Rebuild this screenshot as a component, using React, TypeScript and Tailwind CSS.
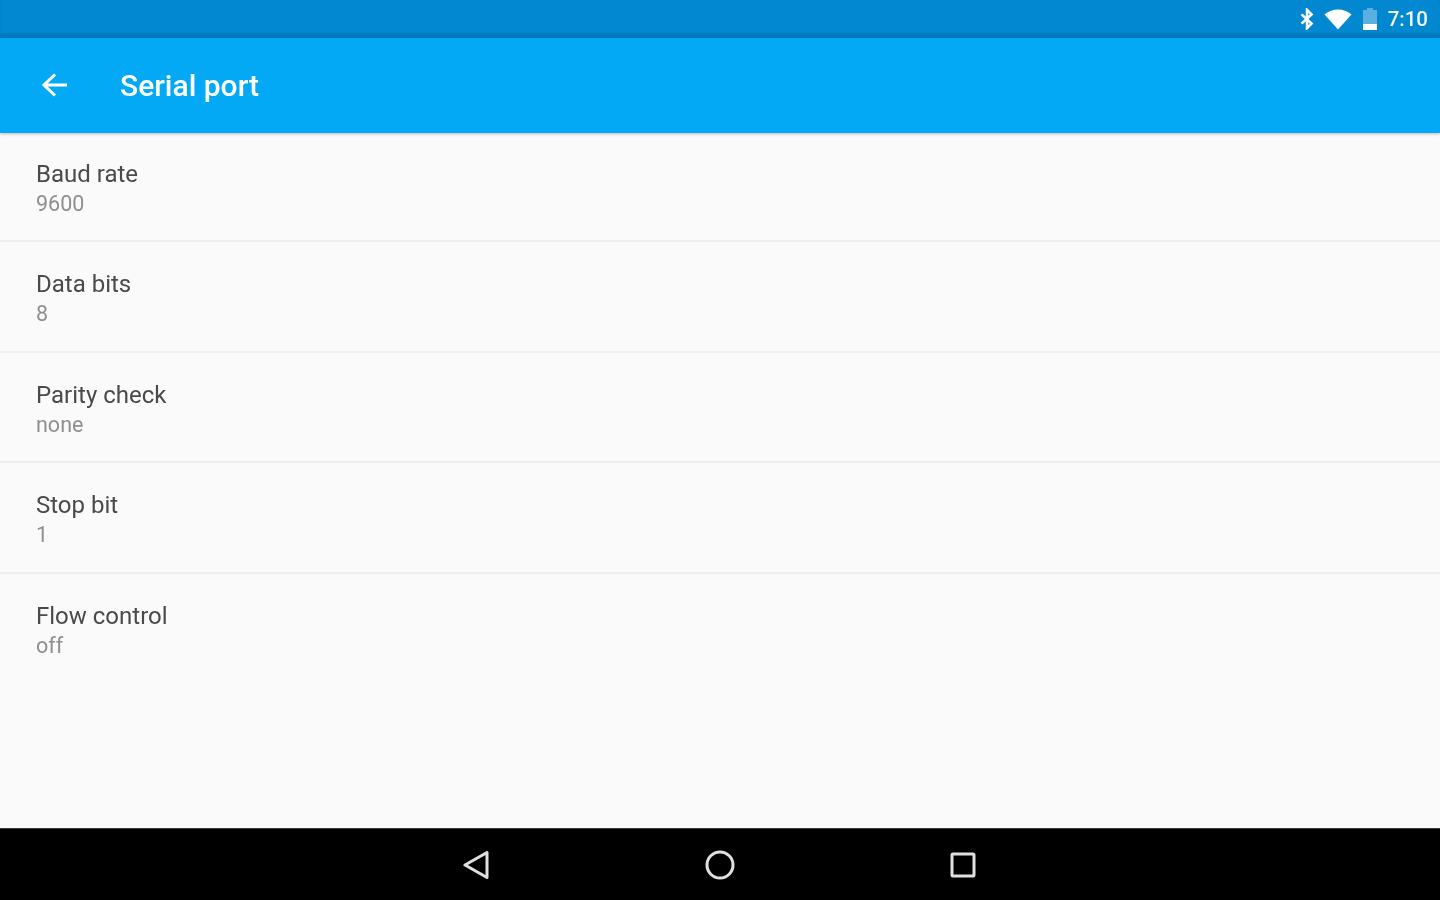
import React from 'react';

const settings = [
    { title: 'Baud rate', value: '9600' },
    { title: 'Data bits', value: '8' },
    { title: 'Parity check', value: 'none' },
    { title: 'Stop bit', value: '1' },
    { title: 'Flow control', value: 'off' },
];

function StatusBar() {
    return (
        <div className="h-[38px] bg-[#0288d1] flex items-center justify-end pr-[12px] shadow-[inset_0_-5px_2px_#027cc0]">
            <svg className="w-[16px] h-[22px] mr-[9px] blur-[0.6px]" viewBox="0 0 16 24" fill="none" stroke="#ffffff" strokeWidth="2.800">
                <path d="M2 7l11 10-5 5V2l5 5L2 17" />
            </svg>
            <svg className="w-[28px] h-[21px] mr-[10px] blur-[0.5px]" viewBox="0 0 28 21" fill="#ffffff">
                <path d="M14 20.5L0.5 5.5C4 2.5 8.500 0.500 14 0.500s10 2 13.500 5z" />
            </svg>
            <svg className="w-[16px] h-[22px] mr-[10px] blur-[0.5px]" viewBox="0 0 16 22">
                <path d="M5 0h6v2h4v20H1V2h4z" fill="#ffffff" fillOpacity="0.35" />
                <path d="M1 16h14v6H1z" fill="#ffffff" />
            </svg>
            <span className="font-['Roboto',sans-serif] font-medium text-[20.500px] leading-none text-[#f2f9fd] blur-[0.6px]">7:10</span>
        </div>
    );
}

function AppBar() {
    return (
        <div className="h-[95px] bg-[#03a9f4] flex items-center pl-[42px] shadow-[0_1px_3px_rgba(0,0,0,0.25)] relative">
            <svg className="w-[26px] h-[26px] mr-[52px] -mt-[1px] blur-[0.6px]" viewBox="0 0 26 26" fill="none" stroke="#ffffff" strokeWidth="3">
                <path d="M25 13H2M13 2.500L2 13l11 10.500" />
            </svg>
            <span className="font-['Roboto',sans-serif] font-medium text-[30px] leading-none text-white mt-[1px] blur-[0.6px]">Serial port</span>
        </div>
    );
}

function NavBar() {
    return (
        <div className="h-[72px] bg-black flex items-center justify-center gap-[213px] border-t border-[#3a3a3a] box-border">
            <svg className="w-[30px] h-[30px] blur-[0.5px]" viewBox="0 0 30 30" fill="none" stroke="#e0e0e0" strokeWidth="3" strokeLinejoin="round">
                <path d="M25 2.500V27.500L3 15z" />
            </svg>
            <svg className="w-[30px] h-[30px] blur-[0.5px]" viewBox="0 0 30 30" fill="none" stroke="#e0e0e0" strokeWidth="3">
                <circle cx="15" cy="15" r="13" />
            </svg>
            <svg className="w-[30px] h-[30px] blur-[0.5px]" viewBox="0 0 30 30" fill="none" stroke="#e0e0e0" strokeWidth="3" strokeLinejoin="round">
                <rect x="4" y="4" width="22" height="22" rx="1" />
            </svg>
        </div>
    );
}

export default function App() {
    return (
        <div className="w-[1440px] h-[900px] flex flex-col bg-[#fafafa] overflow-hidden font-['Roboto',sans-serif]">
            <StatusBar />
            <AppBar />
            <div className="flex-1">
                {settings.map((item, i) => (
                    <div
                        key={i}
                        className={`h-[109.4px] mb-[1px] pl-[36px] pt-[27px] box-border ${i < settings.length - 1 ? 'border-b-2 border-[#eeeeee]' : ''}`}
                    >
                        <div className="text-[24px] leading-[28px] text-[#4a4a4a] blur-[0.7px]">{item.title}</div>
                        <div className="text-[21.500px] leading-[26px] mt-[3px] text-[#8f8f8f] blur-[0.7px]">{item.value}</div>
                    </div>
                ))}
            </div>
            <NavBar />
        </div>
    );
}
